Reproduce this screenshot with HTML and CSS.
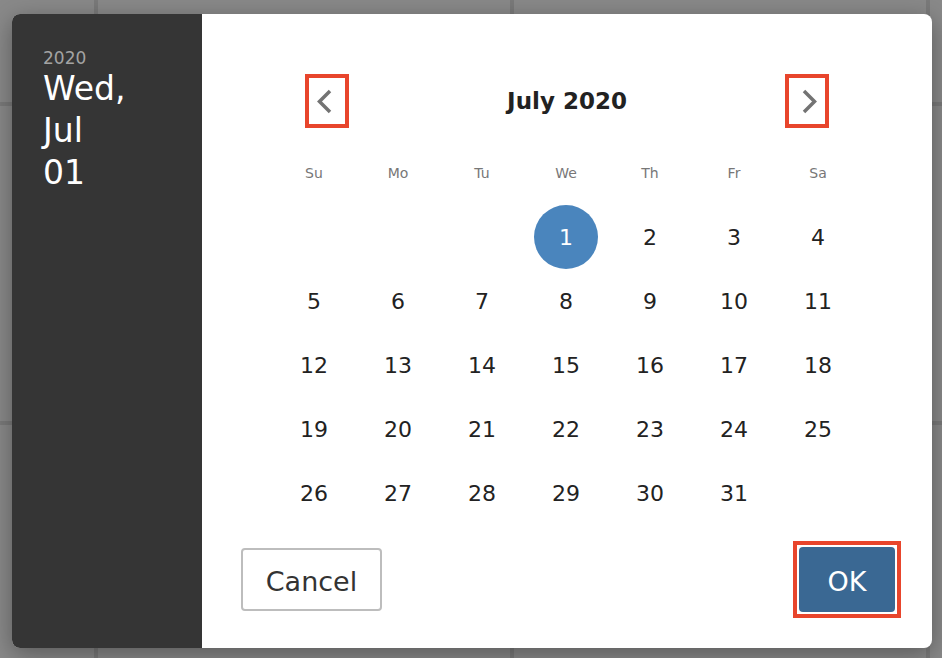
FILE: index.html
```html
<!DOCTYPE html>
<html lang="en">
<head>
    <meta charset="UTF-8">
    <meta name="viewport" content="width=device-width, initial-scale=1.0">
    <title>Date Picker</title>
    <link rel="stylesheet" href="styles.css">
</head>
<body>

    <div class="dialog">
        <div class="date-panel">
            <div class="date-year">2020</div>
            <div class="date-full">
                <span>Wed,</span>
                <span>Jul</span>
                <span>01</span>
            </div>
        </div>

        <div class="calendar-panel">
            <div class="calendar">
                <div class="month-header">
                    <button class="nav-button">
                        <svg width="36" height="46" viewBox="0 0 36 46">
                            <polyline points="21,13 10.5,23.5 21,34" fill="none" stroke="#737373" stroke-width="3.5"/>
                        </svg>
                    </button>
                    <div class="month-title">July 2020</div>
                    <button class="nav-button">
                        <svg width="36" height="46" viewBox="0 0 36 46">
                            <polyline points="15,13 25.5,23.5 15,34" fill="none" stroke="#737373" stroke-width="3.5"/>
                        </svg>
                    </button>
                </div>

                <div class="weekdays">
                    <span>Su</span><span>Mo</span><span>Tu</span><span>We</span><span>Th</span><span>Fr</span><span>Sa</span>
                </div>

                <div class="days">
                    <div class="day first selected"><span>1</span></div>
                    <div class="day">2</div>
                    <div class="day">3</div>
                    <div class="day">4</div>
                    <div class="day">5</div>
                    <div class="day">6</div>
                    <div class="day">7</div>
                    <div class="day">8</div>
                    <div class="day">9</div>
                    <div class="day">10</div>
                    <div class="day">11</div>
                    <div class="day">12</div>
                    <div class="day">13</div>
                    <div class="day">14</div>
                    <div class="day">15</div>
                    <div class="day">16</div>
                    <div class="day">17</div>
                    <div class="day">18</div>
                    <div class="day">19</div>
                    <div class="day">20</div>
                    <div class="day">21</div>
                    <div class="day">22</div>
                    <div class="day">23</div>
                    <div class="day">24</div>
                    <div class="day">25</div>
                    <div class="day">26</div>
                    <div class="day">27</div>
                    <div class="day">28</div>
                    <div class="day">29</div>
                    <div class="day">30</div>
                    <div class="day">31</div>
                </div>
            </div>

            <div class="actions">
                <button class="button cancel-button">Cancel</button>
                <div class="ok-frame">
                    <button class="button ok-button">OK</button>
                </div>
            </div>
        </div>
    </div>

</body>
</html>
```

FILE: styles.css
```css
body {
    margin: 0;
    padding: 14px 10px 10px 12px;
    height: 658px;
    box-sizing: border-box;
    overflow: hidden;
    font-family: "DejaVu Sans", sans-serif;
    background-color: #898989;
    background-image:
        linear-gradient(to right, #7a7a7a 0, #7a7a7a 4px, transparent 4px),
        linear-gradient(to bottom, #7a7a7a 0, #7a7a7a 4px, transparent 4px);
    background-size: 416px 100%, 100% 319px;
    background-position: 94px 0, 0 102px;
}

.dialog {
    display: flex;
    width: 920px;
    height: 634px;
    background-color: #fff;
    border-radius: 8px;
    overflow: hidden;
    box-shadow: 0 6px 24px rgba(0, 0, 0, 0.35);
}

.date-panel {
    width: 190px;
    flex-shrink: 0;
    box-sizing: border-box;
    padding: 34px 0 0 31px;
    background-color: #353535;
}

.date-year {
    font-size: 17px;
    line-height: 20px;
    color: #a3a3a3;
}

.date-full {
    font-size: 33px;
    line-height: 42px;
    color: #fff;
}

.date-full span {
    display: block;
}

.calendar-panel {
    flex: 1;
    display: flex;
    flex-direction: column;
    padding: 60px 31px 30px 39px;
}

.calendar {
    width: 588px;
    margin-left: 31px;
}

.month-header {
    display: flex;
    justify-content: space-between;
    align-items: center;
    height: 54px;
    padding: 0 31px 0 33px;
}

.nav-button {
    width: 44px;
    height: 54px;
    box-sizing: border-box;
    padding: 0;
    border: 4px solid #e8452c;
    background-color: #fff;
    display: flex;
    align-items: center;
    justify-content: center;
    cursor: pointer;
}

.month-title {
    font-size: 23px;
    font-weight: bold;
    color: #222;
}

.weekdays {
    display: grid;
    grid-template-columns: repeat(7, 84px);
    margin-top: 32px;
    margin-bottom: 19px;
}

.weekdays span {
    text-align: center;
    font-size: 14px;
    line-height: 26px;
    color: #777;
}

.days {
    display: grid;
    grid-template-columns: repeat(7, 84px);
    grid-auto-rows: 64px;
}

.day {
    display: flex;
    align-items: center;
    justify-content: center;
    font-size: 22px;
    color: #222;
}

.day.first {
    grid-column-start: 4;
}

.day.selected span {
    display: flex;
    align-items: center;
    justify-content: center;
    width: 64px;
    height: 64px;
    border-radius: 50%;
    background-color: #4a85bd;
    color: #fff;
}

.actions {
    display: flex;
    justify-content: space-between;
    align-items: flex-end;
    margin-top: auto;
}

.button {
    font-family: "DejaVu Sans", sans-serif;
    font-size: 27px;
    padding: 3px 0 0 0;
    cursor: pointer;
}

.cancel-button {
    width: 141px;
    height: 63px;
    margin-bottom: 7px;
    border: 2px solid #bdbdbd;
    border-radius: 4px;
    background-color: #fff;
    color: #333;
}

.ok-frame {
    display: flex;
    padding: 2px;
    border: 4px solid #e8452c;
    background-color: #fff;
}

.ok-button {
    width: 96px;
    height: 65px;
    border: none;
    border-radius: 4px;
    background-color: #3a6893;
    color: #fff;
}
```
